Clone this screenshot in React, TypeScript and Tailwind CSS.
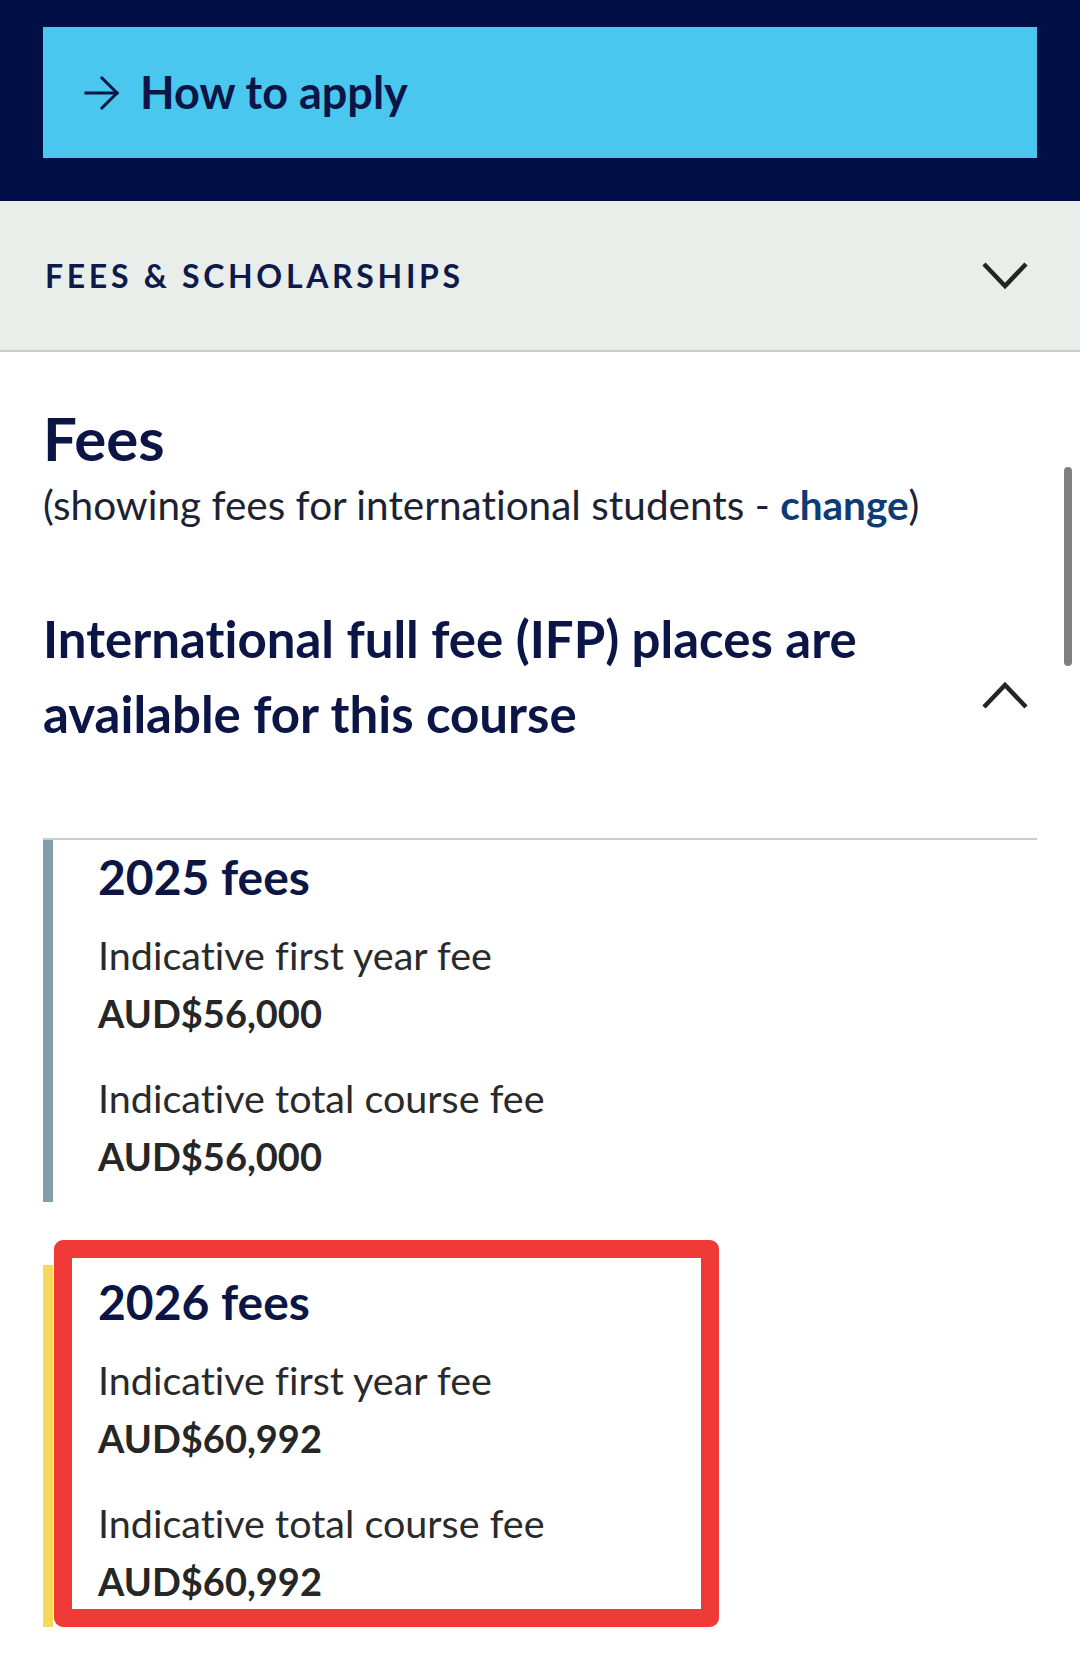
import React from "react";

const fees = [
  {
    year: "2025 fees",
    bar: "bg-[#809eaa]",
    first: "AUD$56,000",
    total: "AUD$56,000",
    topLine: true,
    marked: false,
  },
  {
    year: "2026 fees",
    bar: "bg-[#f4da58]",
    first: "AUD$60,992",
    total: "AUD$60,992",
    topLine: false,
    marked: true,
  },
];

function ArrowRight() {
  return (
    <svg width="36" height="36" viewBox="0 0 36 36" fill="none" stroke="#0b1546" strokeWidth="3" strokeLinecap="square">
      <path d="M2 18h31" />
      <path d="M18 3l15 15-15 15" />
    </svg>
  );
}

function Chevron({ up = false }: { up?: boolean }) {
  return (
    <svg width="46" height="29" viewBox="0 0 46 29" fill="none" stroke="#242424" strokeWidth="4.5">
      {up ? <polyline points="2,26 23,4 44,26" /> : <polyline points="2,3 23,25 44,3" />}
    </svg>
  );
}

export default function App() {
  return (
    <div className="relative h-[1660px] w-[1080px] overflow-hidden bg-white font-[Lato,sans-serif] [font-variant-ligatures:none]">
      {/* Apply bar */}
      <div className="h-[201px] bg-[#000f46] px-[43px] pt-[27px]">
        <a className="flex h-[131px] items-center gap-[20px] bg-[#49c7ef] pl-[41px] text-[#0b1546]">
          <ArrowRight />
          <span className="text-[45px] font-bold leading-none">How to apply</span>
        </a>
      </div>

      {/* Accordion header */}
      <div className="flex h-[151px] items-center justify-between border-b-2 border-[#c5cfc6] bg-[#e9eeea] pl-[45px] pr-[52px]">
        <h2 className="text-[32px] font-bold uppercase tracking-[0.115em] text-[#0d1a4a]">
          Fees &amp; Scholarships
        </h2>
        <Chevron />
      </div>

      {/* Body */}
      <div className="px-[43px] pt-[51px]">
        <h1 className="text-[60px] font-bold leading-[70px] text-[#0b1546]">Fees</h1>
        <p className="mt-[8px] text-[40.5px] leading-[48px] text-[#1d2233]">
          (showing fees for international students -{" "}
          <a className="font-bold text-[#0d3b78]">change</a>)
        </p>

        <div className="mt-[72px] flex justify-between">
          <h2 className="w-[900px] text-[51px] font-bold leading-[75px] text-[#0b1546]">
            International full fee (IFP) places are
            <br />
            available for this course
          </h2>
          <div className="mr-[9px] mb-[41px] self-end">
            <Chevron up />
          </div>
        </div>

        <div className="mt-[87px] flex flex-col gap-[63px]">
          {fees.map((f) => (
            <div
              key={f.year}
              className={`relative flex ${f.topLine ? "border-t-2 border-[#cbcbcb]" : ""}`}
            >
              <div className={`w-[10px] shrink-0 ${f.bar}`} />
              <div className="pl-[45px] pt-[9px] pb-[16px]">
                <h3 className="text-[48px] font-bold leading-[56px] text-[#0b1546]">{f.year}</h3>
                <div className="mt-[20px] text-[39.5px] leading-[59px] text-[#2a2a2a]">
                  Indicative first year fee
                </div>
                <div className="text-[38px] font-bold leading-[59px] text-[#262626]">{f.first}</div>
                <div className="mt-[25px] text-[39.5px] leading-[59px] text-[#2a2a2a]">
                  Indicative total course fee
                </div>
                <div className="text-[38px] font-bold leading-[59px] text-[#262626]">{f.total}</div>
              </div>
              {f.marked && (
                <div className="absolute left-[11px] top-[-25px] h-[387px] w-[665px] rounded-[9px] border-[18px] border-[#f03a37]" />
              )}
            </div>
          ))}
        </div>
      </div>

      {/* Scrollbar overlay */}
      <div className="absolute left-[1064px] top-[467px] h-[199px] w-[8px] rounded-full bg-[#808080]" />
    </div>
  );
}
